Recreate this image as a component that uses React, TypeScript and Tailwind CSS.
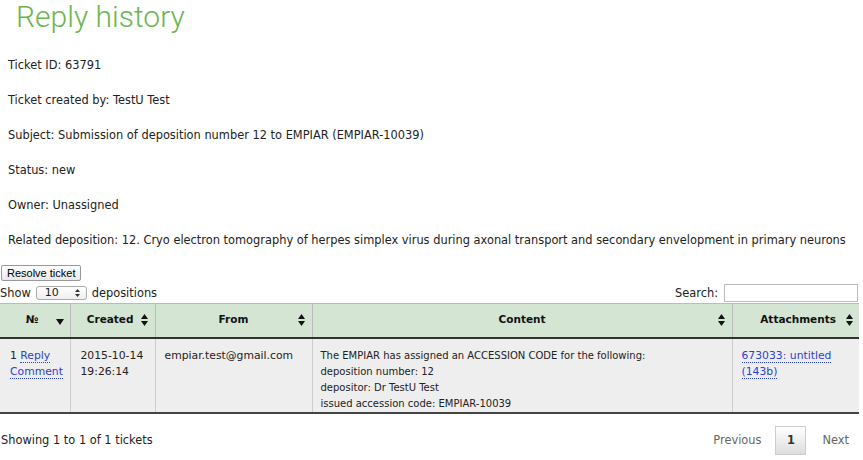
import React from 'react';

const SortBoth = () => (
  <svg width="7" height="12" viewBox="0 0 7 12" className="inline-block shrink-0">
    <path d="M3.5 0 L7 5 L0 5 Z" fill="#111" />
    <path d="M3.5 12 L7 7 L0 7 Z" fill="#111" />
  </svg>
);

const SortDown = () => (
  <svg width="8" height="6" viewBox="0 0 8 6" className="inline-block shrink-0">
    <path d="M0 0 L8 0 L4 6 Z" fill="#111" />
  </svg>
);

const SelectArrows = () => (
  <svg width="5" height="8" viewBox="0 0 5 8" className="shrink-0">
    <path d="M2.5 0 L5 3 L0 3 Z" fill="#333" />
    <path d="M2.5 8 L5 5 L0 5 Z" fill="#333" />
  </svg>
);

const info = [
  'Ticket ID: 63791',
  'Ticket created by: TestU Test',
  'Subject: Submission of deposition number 12 to EMPIAR (EMPIAR-10039)',
  'Status: new',
  'Owner: Unassigned',
  'Related deposition: 12. Cryo electron tomography of herpes simplex virus during axonal transport and secondary envelopment in primary neurons',
];

const link = 'text-[#2b3fd9] border-b border-dotted border-[#2b3fd9]';

export default function App() {
  return (
    <div className="w-[863px] h-[460px] bg-white text-[#222] text-[11.4px] overflow-hidden" style={{ fontFamily: '"DejaVu Sans", Verdana, sans-serif' }}>
      <h1 className="pl-[16px] h-[40px] text-[30px] leading-[40px] -mt-[3px] mb-[3px] font-light text-[#6cb550]" style={{ fontFamily: 'Roboto, "Liberation Sans", sans-serif' }}>
        Reply history
      </h1>

      <div className="pl-[8px] pt-[10px] flex flex-col">
        {info.map((line) => (
          <p key={line} className="h-[35px] leading-[30px] whitespace-nowrap">{line}</p>
        ))}
      </div>

      <div className="pl-[1px] pt-[5px]">
        <button className="h-[16px] px-[5px] border border-[#999] rounded-[2px] bg-gradient-to-b from-white to-[#e8e8e8] text-[11px] leading-[14px] text-black" style={{ fontFamily: '"Liberation Sans", Arial, sans-serif' }}>
          Resolve ticket
        </button>
      </div>

      <div className="flex items-center justify-between h-[20px] mt-[1px] pr-[5px]">
        <div className="flex items-center gap-[5px]">
          <span>Show</span>
          <span className="w-[51px] h-[14px] border border-[#aaa] rounded-[3px] bg-gradient-to-b from-white to-[#eee] flex items-center justify-between pl-[8px] pr-[6px] text-[11px]">
            <span>10</span>
            <SelectArrows />
          </span>
          <span>depositions</span>
        </div>
        <div className="flex items-center gap-[6px]">
          <span>Search:</span>
          <span className="w-[134px] h-[18px] border border-[#bbb] bg-white" />
        </div>
      </div>

      <table className="w-[859px] border-collapse table-fixed text-[10.8px]">
        <colgroup>
          <col className="w-[70px]" />
          <col className="w-[85px]" />
          <col className="w-[157px]" />
          <col className="w-[420px]" />
          <col className="w-[127px]" />
        </colgroup>
        <thead>
          <tr className="h-[34px] bg-[#d5e5d4] font-bold text-[10.5px] text-[#111] border-b-2 border-[#333]">
            <th className="border border-[#bbb] border-b-0 border-l-0 px-[6px]">
              <div className="flex items-center justify-end gap-[17px]">
                <span>№</span>
                <span className="pt-[3px]"><SortDown /></span>
              </div>
            </th>
            <th className="border border-[#bbb] border-b-0 px-[7px]">
              <div className="flex items-center justify-end gap-[7px]">
                <span>Created</span>
                <SortBoth />
              </div>
            </th>
            <th className="border border-[#bbb] border-b-0 px-[7px]">
              <div className="flex items-center justify-between">
                <span className="w-[7px]" />
                <span>From</span>
                <SortBoth />
              </div>
            </th>
            <th className="border border-[#bbb] border-b-0 px-[7px]">
              <div className="flex items-center justify-between">
                <span className="w-[7px]" />
                <span>Content</span>
                <SortBoth />
              </div>
            </th>
            <th className="border border-[#bbb] border-b-0 border-r-0 px-[6px]">
              <div className="flex items-center justify-end gap-[10px]">
                <span>Attachments</span>
                <SortBoth />
              </div>
            </th>
          </tr>
        </thead>
        <tbody>
          <tr className="h-[70px] bg-[#eeeeee] align-top leading-[16px] border-b-2 border-[#444]">
            <td className="border-r border-[#ccc] pl-[10px] pt-[9px] whitespace-nowrap">
              1 <span className={link}>Reply</span>
              <br />
              <span className={link}>Comment</span>
            </td>
            <td className="border-r border-[#ccc] pl-[10px] pt-[9px] whitespace-nowrap">
              2015-10-14
              <br />
              19:26:14
            </td>
            <td className="border-r border-[#ccc] px-[9px] pt-[9px] whitespace-nowrap">empiar.test@gmail.com</td>
            <td className="border-r border-[#ccc] px-[8px] pt-[9px] whitespace-nowrap text-[10px]">
              The EMPIAR has assigned an ACCESSION CODE for the following:
              <br />
              deposition number: 12
              <br />
              depositor: Dr TestU Test
              <br />
              issued accession code: EMPIAR-10039
            </td>
            <td className="px-[9px] pt-[9px] whitespace-nowrap">
              <span className={link}>673033: untitled</span>
              <br />
              <span className={link}>(143b)</span>
            </td>
          </tr>
        </tbody>
      </table>

      <div className="flex items-center justify-between pt-[13px] pr-[14px]">
        <span className="pl-[1px]">Showing 1 to 1 of 1 tickets</span>
        <div className="flex items-center -mt-[1px]">
          <span className="text-[#666] px-[12px]">Previous</span>
          <span className="w-[31px] h-[29px] border border-[#ccc] bg-gradient-to-b from-white to-[#ddd] flex items-center justify-center font-bold text-[#333] mx-[2px]">1</span>
          <span className="text-[#666] pl-[14px]">Next</span>
        </div>
      </div>
    </div>
  );
}
